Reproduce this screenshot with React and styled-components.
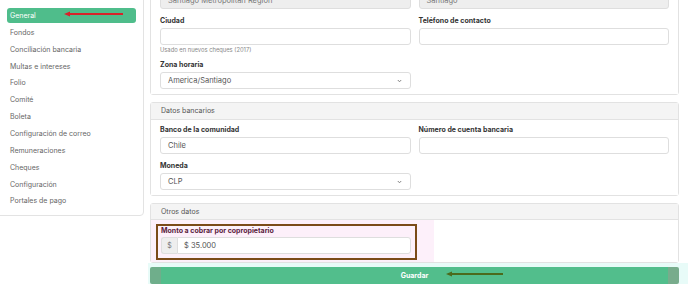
import React from "react";
import styled, { createGlobalStyle } from "styled-components";

const Global = createGlobalStyle`
  html, body { margin: 0; padding: 0; background: #fff; }
  body { font-family: Inter, "Open Sans", "Liberation Sans", sans-serif; overflow: hidden; }
  * { box-sizing: border-box; }
`;

const Page = styled.div`
  position: relative;
  display: flex;
  align-items: flex-start;
  gap: 6px;
  width: 688px;
  height: 284px;
  overflow: hidden;
  padding-right: 9px;
`;

const Sidebar = styled.nav`
  position: relative;
  flex: 0 0 145px;
  margin-left: -1px;
  margin-top: -1px;
  border: 1px solid #e3e3e3;
  border-radius: 0 0 4px 0;
  background: #fff;
  padding: 8px 7px 7px 7px;
  display: flex;
  flex-direction: column;
  gap: 1.86px;
`;

const NavItem = styled.div`
  height: 15px;
  line-height: 15px;
  padding-left: 3px;
  font-size: 7px;
  border-radius: 3px;
  color: ${(p) => (p.$active ? "#fff" : "#666")};
  background: ${(p) => (p.$active ? "#4fbd8b" : "transparent")};
  white-space: nowrap;
`;

const Main = styled.main`
  flex: 1;
  margin-top: -43px;
  display: flex;
  flex-direction: column;
  gap: 7px;
`;

const Card = styled.section`
  border: 1px solid #e2e2e2;
  border-radius: 3px;
  background: #fff;
`;

const CardHeader = styled.div`
  height: ${(p) => p.$h || 17}px;
  line-height: ${(p) => (p.$h || 17) - 1}px;
  padding-left: 10px;
  font-size: 7px;
  color: #555;
  background: #f4f4f4;
  border-bottom: 1px solid #e2e2e2;
`;

const Body = styled.div`
  display: grid;
  grid-template-columns: 1fr 1fr;
  gap: 7px 8px;
  padding: ${(p) => p.$pad || "5px 9px 5px 9px"};
  background: ${(p) => p.$bg || "#fff"};
`;

const Field = styled.div`
  display: flex;
  flex-direction: column;
`;

const Label = styled.label`
  display: block;
  font-size: 7px;
  font-weight: 700;
  line-height: 10px;
  height: 10px;
  margin-bottom: ${(p) => p.$mb ?? 2}px;
  color: ${(p) => p.$color || "#333"};
  white-space: nowrap;
`;

const Input = styled.div`
  height: 17px;
  line-height: 15px;
  border: 1px solid #dedede;
  border-radius: 3px;
  padding: 0 8px 0 7px;
  font-size: 7.5px;
  color: ${(p) => (p.$disabled ? "#777" : "#555")};
  background: ${(p) => (p.$disabled ? "#eeeeee" : "#fff")};
  display: flex;
  align-items: center;
  justify-content: space-between;
  white-space: nowrap;
  overflow: hidden;
`;

const Help = styled.div`
  font-size: 5.8px;
  line-height: 7px;
  margin-top: 1px;
  color: #888;
`;

const Highlight = styled.div`
  border: 2px solid #7b4b18;
  padding: 0 4px 4px 3px;
  margin-left: -4px;
  margin-right: -6px;
`;

const Group = styled.div`
  display: flex;
  height: 17px;
`;

const Addon = styled.div`
  width: 16px;
  border: 1px solid #dedede;
  border-right: none;
  border-radius: 3px 0 0 3px;
  background: #eee;
  color: #777;
  font-size: 7px;
  line-height: 15px;
  text-align: center;
`;

const GroupInput = styled(Input)`
  flex: 1;
  border-radius: 0 3px 3px 0;
  padding-left: 6px;
`;

const ButtonBar = styled.div`
  margin: -7px -9px 0 -2px;
  padding: 4px 9px 10px 2px;
  background: #e8fbf8;
`;

const Button = styled.button`
  display: block;
  width: 100%;
  height: 17px;
  border: none;
  border-radius: 2px;
  font-family: inherit;
  font-size: 7px;
  font-weight: 700;
  color: #fff;
  background: linear-gradient(
    to right,
    #6fae8b 0 11px,
    #52be8c 11px calc(100% - 11px),
    #78ac8c calc(100% - 11px)
  );
`;

const Arrow = styled.svg`
  position: absolute;
  left: ${(p) => p.$x}px;
  top: ${(p) => p.$y}px;
  pointer-events: none;
`;

const Chevron = () => (
  <svg width="5" height="4" viewBox="0 0 5 4">
    <path d="M0.8 1 L2.5 2.8 L4.2 1" fill="none" stroke="#777" strokeWidth="0.9" />
  </svg>
);

const ArrowLeft = ({ x, y, w, color }) => (
  <Arrow $x={x} $y={y} width={w} height="6" viewBox={`0 0 ${w} 6`}>
    <line x1="5" y1="3" x2={w} y2="3" stroke={color} strokeWidth="1.8" />
    <path d="M0 3 L6 0.4 L6 5.6 Z" fill={color} />
  </Arrow>
);

const nav = [
  "General",
  "Fondos",
  "Conciliación bancaria",
  "Multas e intereses",
  "Folio",
  "Comité",
  "Boleta",
  "Configuración de correo",
  "Remuneraciones",
  "Cheques",
  "Configuración",
  "Portales de pago",
];

export default function App() {
  return (
    <>
      <Global />
      <Page>
        <Sidebar>
          {nav.map((n, i) => (
            <NavItem key={n} $active={i === 0}>
              {n}
            </NavItem>
          ))}
        </Sidebar>
        <Main>
          <Card>
            <CardHeader>Datos generales</CardHeader>
            <Body>
              <Field>
                <Label>Región</Label>
                <Input $disabled>Santiago Metropolitan Region</Input>
              </Field>
              <Field>
                <Label>Comuna</Label>
                <Input $disabled>Santiago</Input>
              </Field>
              <Field>
                <Label>Ciudad</Label>
                <Input />
                <Help>Usado en nuevos cheques (2017)</Help>
              </Field>
              <Field>
                <Label>Teléfono de contacto</Label>
                <Input />
              </Field>
              <Field>
                <Label>Zona horaria</Label>
                <Input>
                  America/Santiago
                  <Chevron />
                </Input>
              </Field>
            </Body>
          </Card>
          <Card>
            <CardHeader>Datos bancarios</CardHeader>
            <Body>
              <Field>
                <Label>Banco de la comunidad</Label>
                <Input>Chile</Input>
              </Field>
              <Field>
                <Label>Número de cuenta bancaria</Label>
                <Input />
              </Field>
              <Field>
                <Label>Moneda</Label>
                <Input>
                  CLP
                  <Chevron />
                </Input>
              </Field>
            </Body>
          </Card>
          <Card>
            <CardHeader $h={16}>Otros datos</CardHeader>
            <Body
              $pad="4px 9px 2px 9px"
              $bg="linear-gradient(to right, #fdf0fa 0 283px, #fff 283px)"
            >
              <Highlight>
                <Label $mb={1} $color="#5a1b3c">
                  Monto a cobrar por copropietario
                </Label>
                <Group>
                  <Addon>$</Addon>
                  <GroupInput>$ 35.000</GroupInput>
                </Group>
              </Highlight>
            </Body>
          </Card>
          <ButtonBar>
            <Button>Guardar</Button>
          </ButtonBar>
        </Main>
        <ArrowLeft x={64} y={11} w={59} color="#d8232a" />
        <ArrowLeft x={446} y={271} w={57} color="#4b6a1c" />
      </Page>
    </>
  );
}
